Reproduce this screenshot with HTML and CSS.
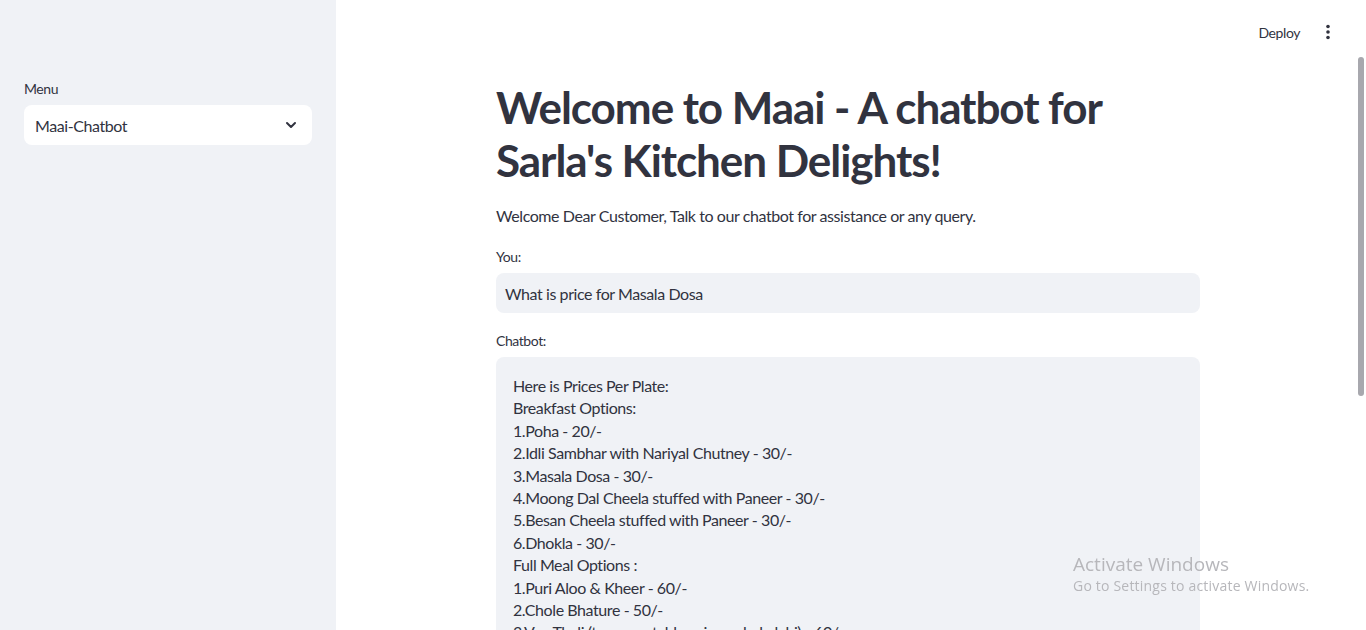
FILE: index.html
```html
<!DOCTYPE html>
<html>
<head>
<meta charset="utf-8">
<link rel="stylesheet" href="styles.css">
</head>
<body>
<div class="app">
  <aside class="sidebar">
    <div class="side-inner">
      <label class="label">Menu</label>
      <div class="select">
        <span>Maai-Chatbot</span>
        <svg class="chev" width="16" height="16" viewBox="0 0 24 24"><path d="M6 9l6 6 6-6" fill="none" stroke="#31333f" stroke-width="3" stroke-linecap="round" stroke-linejoin="round"/></svg>
      </div>
    </div>
  </aside>
  <main class="main">
    <header class="topbar">
      <span class="deploy">Deploy</span>
      <svg class="kebab" width="6" height="16" viewBox="0 0 6 16"><circle cx="3" cy="2.5" r="1.8" fill="#31333f"/><circle cx="3" cy="8" r="1.8" fill="#31333f"/><circle cx="3" cy="13.5" r="1.8" fill="#31333f"/></svg>
    </header>
    <section class="content">
      <h1 class="title">Welcome to Maai - A chatbot for Sarla's Kitchen Delights!</h1>
      <p class="intro">Welcome Dear Customer, Talk to our chatbot for assistance or any query.</p>
      <label class="label">You:</label>
      <div class="input">What is price for Masala Dosa</div>
      <label class="label chat-label">Chatbot:</label>
      <div class="textarea">
        <div>Here is Prices Per Plate:</div>
        <div>Breakfast Options:</div>
        <div>1.Poha - 20/-</div>
        <div>2.Idli Sambhar with Nariyal Chutney - 30/-</div>
        <div>3.Masala Dosa - 30/-</div>
        <div>4.Moong Dal Cheela stuffed with Paneer - 30/-</div>
        <div>5.Besan Cheela stuffed with Paneer - 30/-</div>
        <div>6.Dhokla - 30/-</div>
        <div>Full Meal Options :</div>
        <div>1.Puri Aloo &amp; Kheer - 60/-</div>
        <div>2.Chole Bhature - 50/-</div>
        <div>3.Veg Thali (two vegetables, rice, salad, dahi) - 60/-</div>
        <div>4.Rajma Chawal - 50/-</div>
      </div>
    </section>
    <div class="scrollbar"></div>
  </main>
</div>
<div class="watermark">
  <div class="wm1">Activate Windows</div>
  <div class="wm2">Go to Settings to activate Windows.</div>
</div>
</body>
</html>
```
FILE: styles.css
```css
* { box-sizing: border-box; }
html, body { margin: 0; padding: 0; height: 630px; overflow: hidden; }
body {
  font-family: "Source Sans Pro", "Lato", "Liberation Sans", sans-serif;
  color: #31333f;
  background: #fff;
  letter-spacing: -0.42px;
}
.app { display: flex; height: 630px; }
.sidebar {
  width: 336px;
  flex: none;
  background: #f0f2f6;
}
.side-inner { padding: 80px 24px 0 24px; }
.label {
  display: block;
  font-size: 14px;
  line-height: 18px;
  margin-bottom: 7px;
  color: #31333f;
}
.select {
  height: 40px;
  background: #fff;
  border-radius: 8px;
  display: flex;
  align-items: center;
  justify-content: space-between;
  padding: 0 13px 0 11px;
  font-size: 16px;
}
.main { flex: 1; position: relative; overflow: hidden; }
.topbar {
  height: 64px;
  display: flex;
  align-items: center;
  justify-content: flex-end;
  padding-right: 35px;
  gap: 25px;
}
.deploy { font-size: 14px; }
.kebab { display: block; }
.content {
  width: 704px;
  margin-left: 160px;
  padding-top: 17px;
}
.title {
  font-size: 44px;
  font-weight: 700;
  line-height: 53px;
  margin: 0 0 17px 0;
  letter-spacing: -1.05px;
}
.intro { font-size: 16px; line-height: 24px; margin: 0 0 20px 0; }
.input {
  height: 40px;
  background: #f0f2f6;
  border-radius: 8px;
  display: flex;
  align-items: center;
  padding-left: 9px;
  font-size: 16px;
  margin-bottom: 19px;
}
.chat-label { margin-bottom: 7px; }
.textarea {
  background: #f0f2f6;
  border-radius: 8px;
  padding: 18px 17px;
  font-size: 16px;
  line-height: 22.4px;
}
.scrollbar {
  position: absolute;
  right: 2px;
  top: 57px;
  width: 6px;
  height: 339px;
  border-radius: 3px;
  background: #a8a8ae;
}
.watermark {
  position: fixed;
  left: 1073px;
  top: 552px;
  color: #b7b7bb;
  font-family: "Open Sans", "Noto Sans", sans-serif;
  letter-spacing: 0;
}
.wm1 { font-size: 19px; line-height: 24px; }
.wm2 { font-size: 14px; line-height: 20px; letter-spacing: 0.2px; }
```
